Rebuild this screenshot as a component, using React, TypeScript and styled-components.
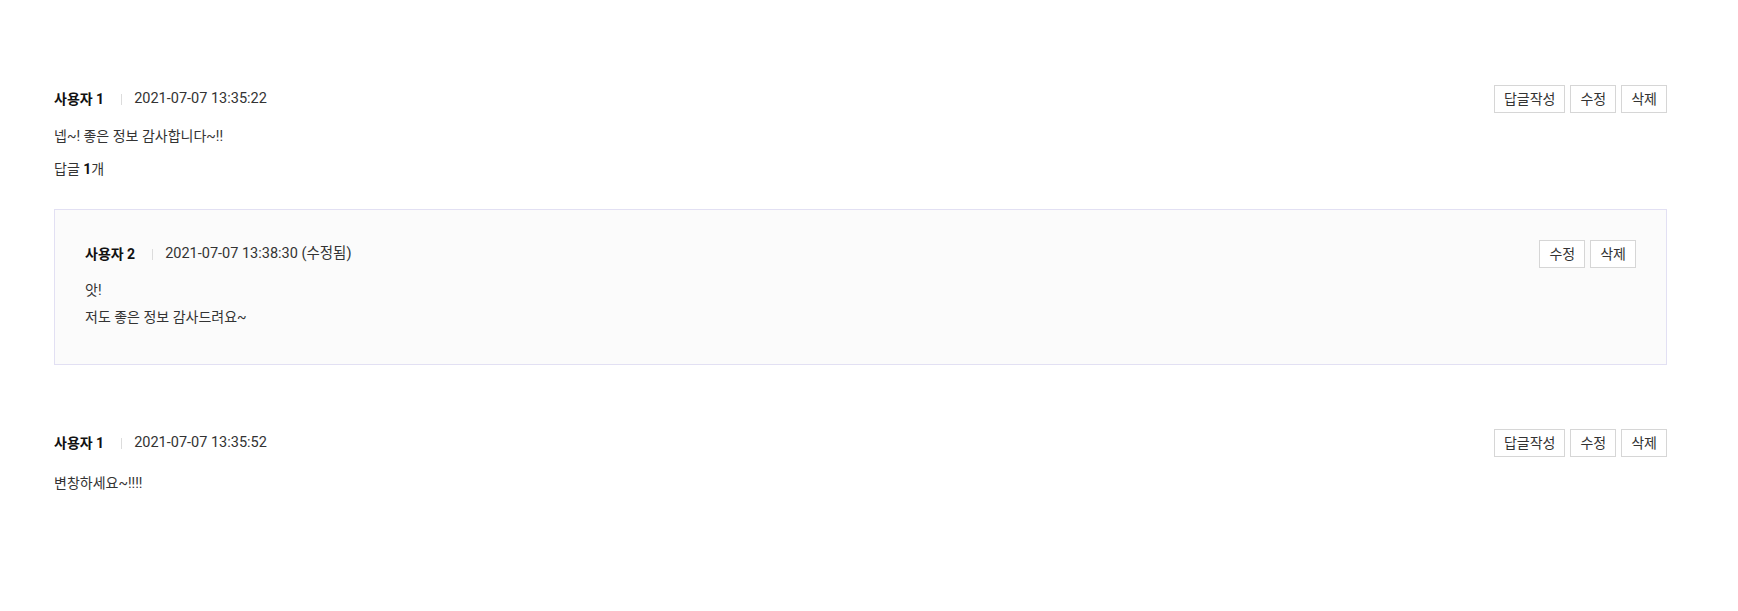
import React from "react";
import styled, { createGlobalStyle } from "styled-components";

const Global = createGlobalStyle`
  html, body { margin: 0; padding: 0; background: #fff; }
  body {
    font-family: Roboto, "Noto Sans CJK KR", "Noto Sans", sans-serif;
    color: #333;
    font-size: 14px;
  }
  * { box-sizing: border-box; }
`;

const Page = styled.div`
  padding: 85px 71px 40px 54px;
`;

const CommentList = styled.ul`
  list-style: none;
  margin: 0;
  padding: 0;
`;

const CommentItem = styled.li`
  & + & { margin-top: 64px; }
`;

const Header = styled.div`
  display: flex;
  align-items: center;
  justify-content: space-between;
  height: 28px;
`;

const Meta = styled.div`
  display: flex;
  align-items: center;
  font-size: 14px;
  line-height: 20px;
`;

const Author = styled.span`
  font-weight: 700;
  color: #111;
`;

const Divider = styled.span`
  display: inline-block;
  width: 1px;
  height: 11px;
  background: #dcdcdc;
  margin: 0 12px 0 17px;
`;

const DateText = styled.span`
  color: #333;
  font-size: 14.5px;
`;

const Actions = styled.div`
  display: flex;
  gap: 5px;
`;

const ActionButton = styled.button`
  height: 28px;
  padding: 0 9px;
  border: 1px solid #d6d6d6;
  background: #fff;
  color: #333;
  font-family: Roboto, "Noto Sans CJK KR", sans-serif;
  font-size: 14px;
  line-height: 26px;
  cursor: pointer;
`;

const Body = styled.div<{ $gap?: number }>`
  margin-top: ${(p) => p.$gap ?? 10}px;
  line-height: 27px;
  font-size: 14px;
  color: #333;
  white-space: pre-line;
`;

const ReplyCount = styled.div`
  margin-top: 6px;
  line-height: 27px;
  color: #333;
  b { font-weight: 700; color: #111; }
`;

const ReplyBox = styled.div`
  margin-top: 26px;
  border: 1px solid #e2e0f3;
  background: #fbfbfb;
  padding: 30px 30px 33px 30px;
`;

type Comment = {
  author: string;
  date: string;
  text: string;
  canReply?: boolean;
};

const CommentBlock: React.FC<{ c: Comment; bodyGap?: number }> = ({ c, bodyGap }) => (
  <>
    <Header>
      <Meta>
        <Author>{c.author}</Author>
        <Divider />
        <DateText>{c.date}</DateText>
      </Meta>
      <Actions>
        {c.canReply && <ActionButton>답글작성</ActionButton>}
        <ActionButton>수정</ActionButton>
        <ActionButton>삭제</ActionButton>
      </Actions>
    </Header>
    <Body $gap={bodyGap}>{c.text}</Body>
  </>
);

export default function App() {
  return (
    <>
      <Global />
      <Page>
        <CommentList>
          <CommentItem>
            <CommentBlock
              c={{
                author: "사용자 1",
                date: "2021-07-07 13:35:22",
                text: "넵~! 좋은 정보 감사합니다~!!",
                canReply: true,
              }}
            />
            <ReplyCount>
              답글 <b>1</b>개
            </ReplyCount>
            <ReplyBox>
              <CommentBlock
                bodyGap={9}
                c={{
                  author: "사용자 2",
                  date: "2021-07-07 13:38:30 (수정됨)",
                  text: "앗!\n저도 좋은 정보 감사드려요~",
                }}
              />
            </ReplyBox>
          </CommentItem>
          <CommentItem>
            <CommentBlock
              bodyGap={13}
              c={{
                author: "사용자 1",
                date: "2021-07-07 13:35:52",
                text: "변창하세요~!!!!",
                canReply: true,
              }}
            />
          </CommentItem>
        </CommentList>
      </Page>
    </>
  );
}
